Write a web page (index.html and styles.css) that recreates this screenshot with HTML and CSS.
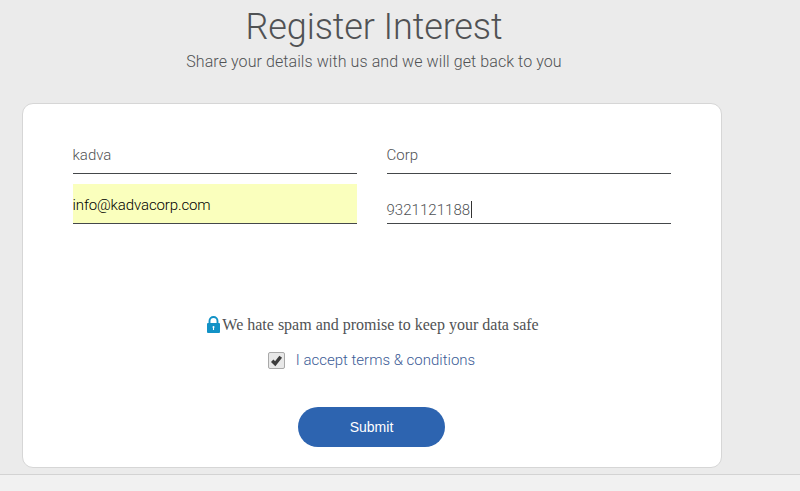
FILE: index.html
```html
<!DOCTYPE html>
<html lang="en">
<head>
<meta charset="utf-8">
<title>Register Interest</title>
<link rel="stylesheet" href="styles.css">
</head>
<body>
<main>
  <h1>Register Interest</h1>
  <p class="subtitle">Share your details with us and we will get back to you</p>
  <form class="card">
    <div class="fields">
      <div class="field"><span>kadva</span></div>
      <div class="field"><span>Corp</span></div>
      <div class="field filled"><span>info@kadvacorp.com</span></div>
      <div class="field phone"><span>9321121188</span><i class="caret"></i></div>
    </div>
    <p class="safe">
      <svg width="15" height="18" viewBox="0 0 15 18"><path d="M3.5 8V5a4 4 0 0 1 8 0v3" fill="none" stroke="#1292c6" stroke-width="1.9"/><rect x="1" y="7" width="13" height="10" rx="1" fill="#1292c6"/><path d="M7.5 11v3" stroke="#fff" stroke-width="1.1"/><circle cx="7.5" cy="11" r="1" fill="#fff"/></svg>
      <span>We hate spam and promise to keep your data safe</span>
    </p>
    <label class="terms"><span class="check"><svg width="15" height="15" viewBox="0 0 15 15"><path d="M3.2 7.8l3 3 5.5-7" fill="none" stroke="#3c3c3c" stroke-width="3.4"/></svg></span><span>I accept terms &amp; conditions</span></label>
    <button type="button">Submit</button>
  </form>
</main>
<footer></footer>
</body>
</html>
```
FILE: styles.css
```css
* { box-sizing: border-box; }
body { margin: 0; width: 800px; height: 491px; overflow: hidden; background: #ebebeb; font-family: Roboto, sans-serif; font-weight: 300; color: #505254; display: flex; flex-direction: column; }
main { height: 474px; flex: none; padding-left: 22px; }
h1 { margin: 0; padding-top: 5px; width: 704px; height: 50px; line-height: 44px; font-size: 36px; letter-spacing: -.1px; font-weight: 300; text-align: center; white-space: nowrap; }
.subtitle { margin: 0; width: 704px; height: 53px; line-height: 24px; font-size: 16px; letter-spacing: .08px; text-align: center; white-space: nowrap; }
.card { width: 700px; height: 365px; background: #fff; border: 1px solid #d6d6d6; border-radius: 11px; padding: 30px 50px 0 49px; display: flex; flex-direction: column; align-items: center; }
.fields { display: grid; grid-template-columns: 284px 284px; column-gap: 30px; row-gap: 10px; width: 598px; }
.field { height: 40px; padding-top: 2px; border-bottom: 1px solid #44474a; font-size: 15px; display: flex; align-items: center; }
.filled { background: #faffbd; color: #000; letter-spacing: -.12px; }
.phone { padding-top: 12px; letter-spacing: .04px; }
.caret { width: 1px; height: 17px; margin-left: 1px; background: #333; }
.safe { margin: 91px 0 0 2px; height: 20px; display: flex; align-items: center; font: 16px/20px "Liberation Serif", serif; white-space: nowrap; }
.safe svg { margin-right: 1px; }
.terms { margin-top: 14px; height: 22px; display: flex; align-items: center; gap: 11px; font-size: 15px; color: #3c5c96; white-space: nowrap; }
.check { width: 17px; height: 17px; border: 1px solid #a9a9a9; border-radius: 2px; background: #e8e8e8; display: flex; }
button { margin-top: 36px; padding: 0; width: 147px; height: 40px; border: 0; border-radius: 20px; background: #2d64b0; color: #fff; font: 400 14px "Liberation Sans", Arial, sans-serif; }
footer { height: 17px; background: #f1f1f1; border-top: 1px solid #d3d3d3; }
```
